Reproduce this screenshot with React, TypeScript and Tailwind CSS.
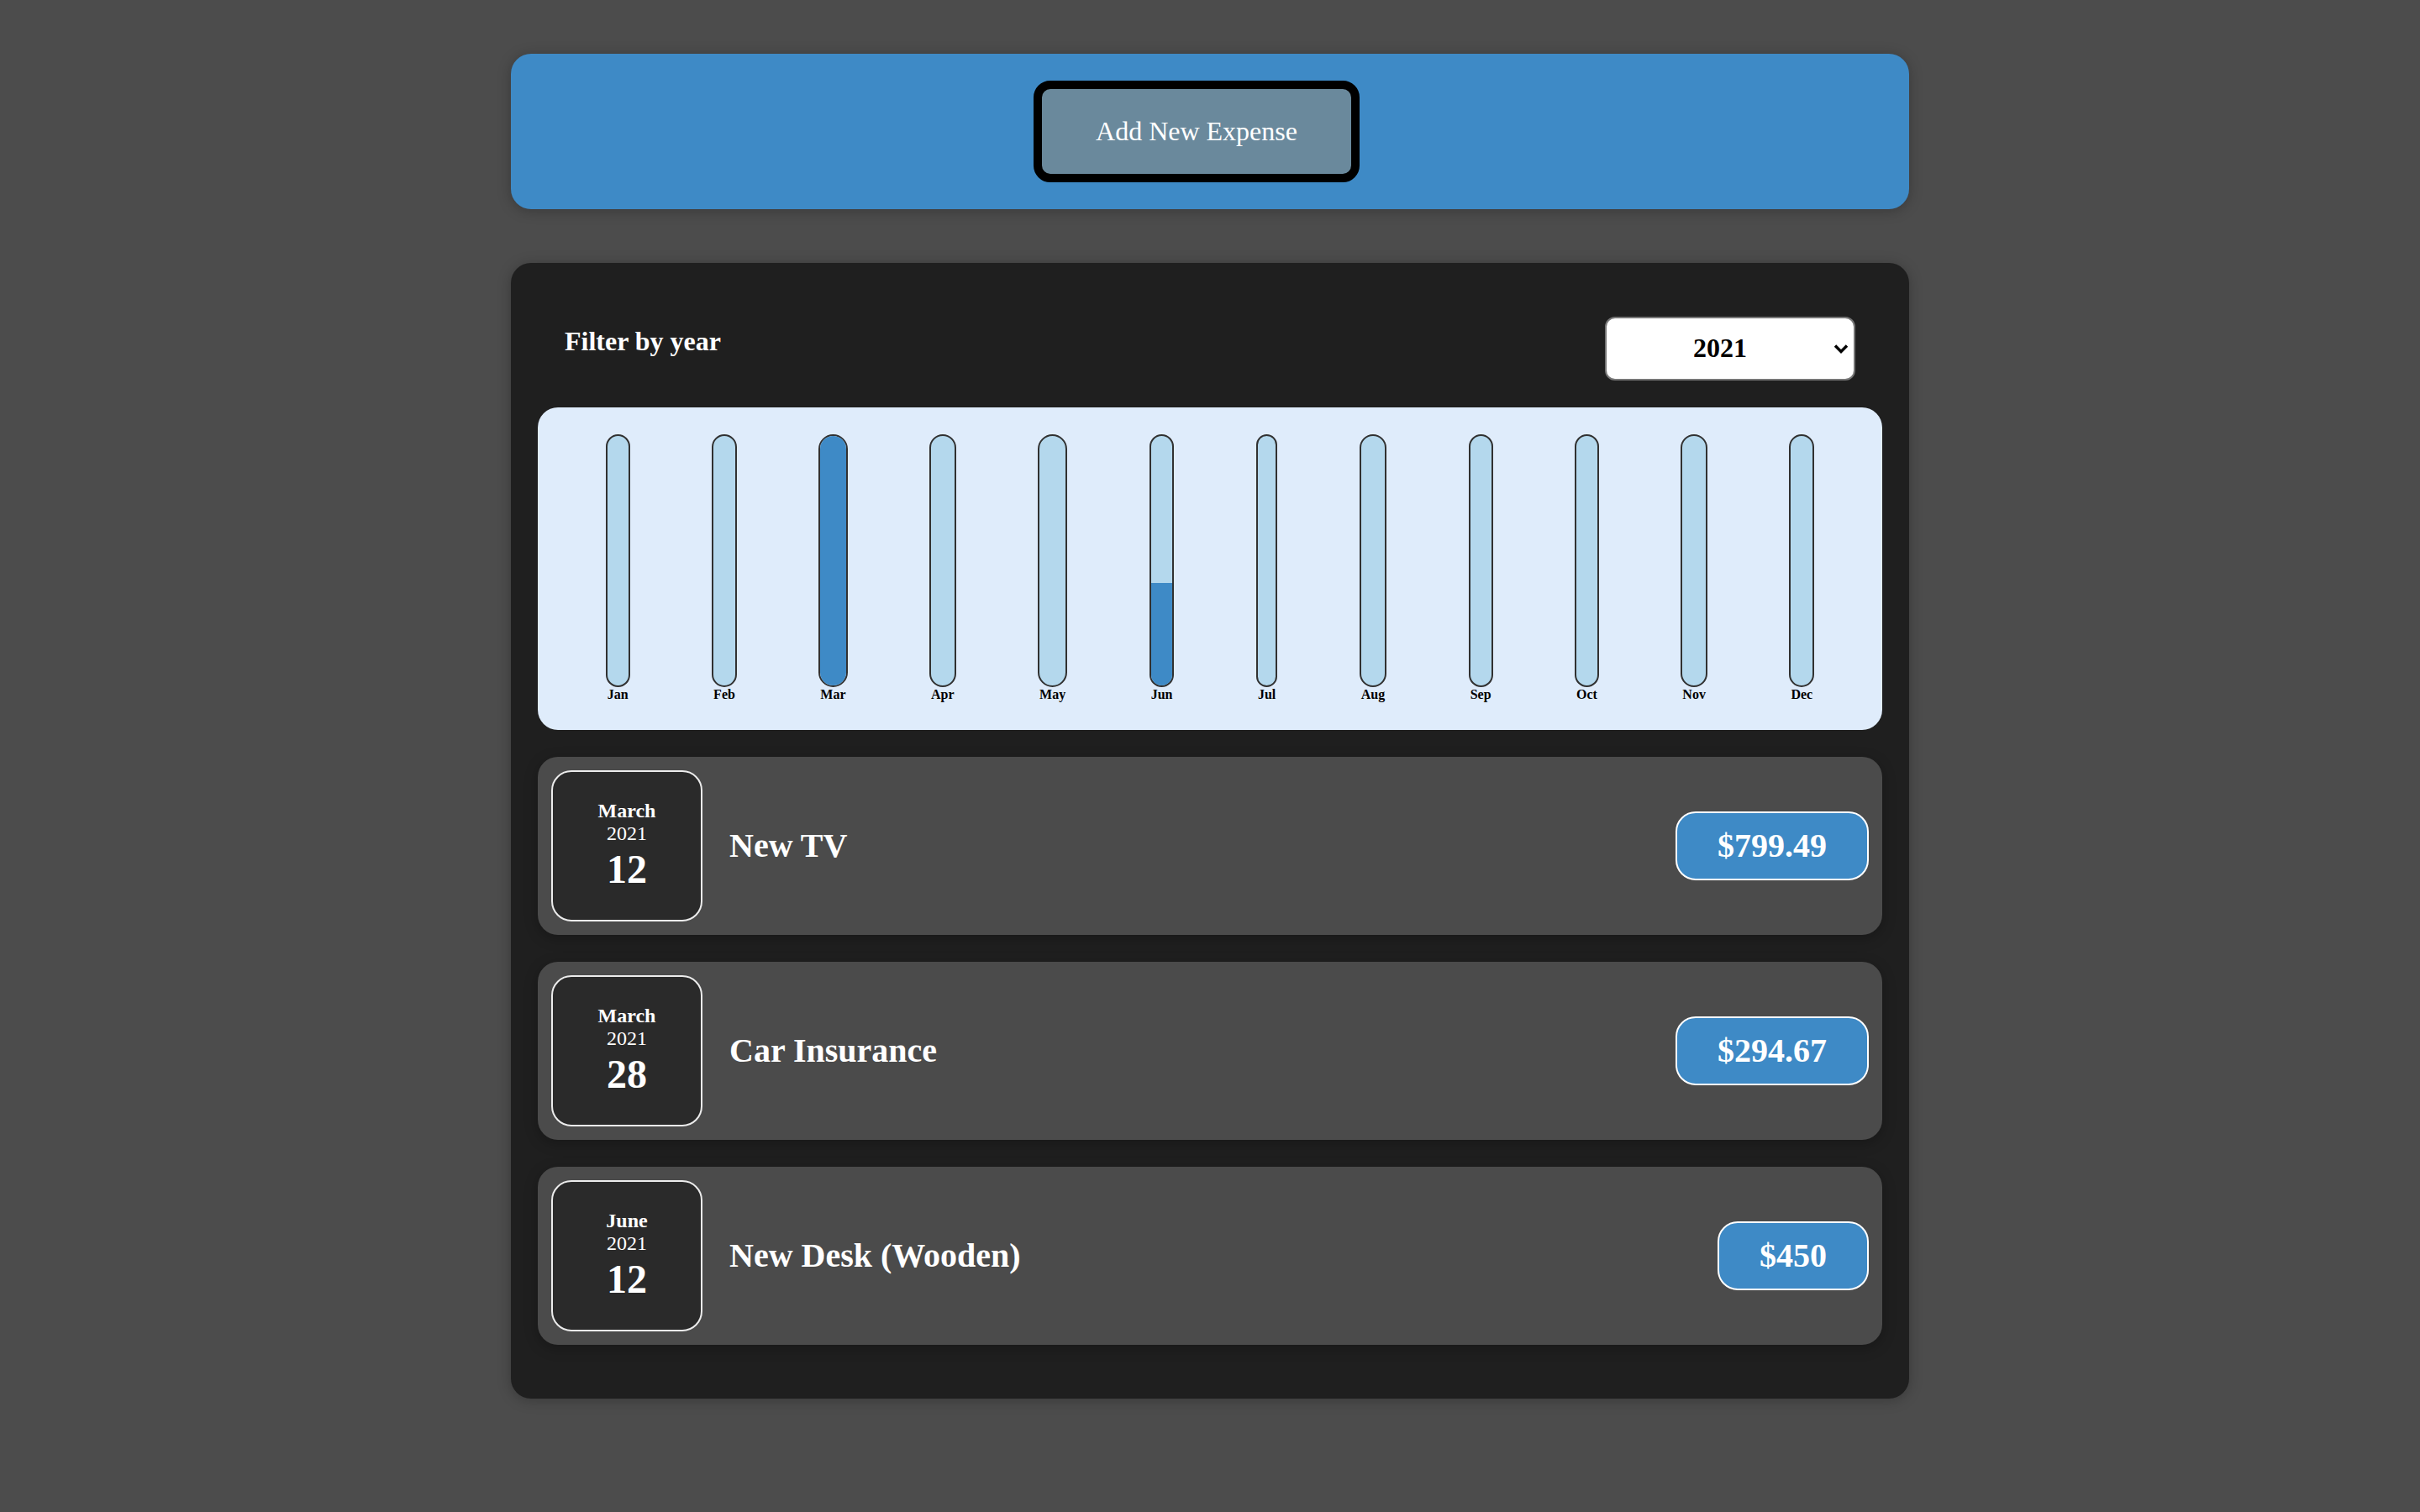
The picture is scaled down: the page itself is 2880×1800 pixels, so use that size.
import { useState } from 'react';

type Expense = {
    id: string;
    title: string;
    amount: number;
    date: Date;
};

const EXPENSES: Expense[] = [
    { id: 'e1', title: 'New TV', amount: 799.49, date: new Date(2021, 2, 12) },
    { id: 'e2', title: 'Car Insurance', amount: 294.67, date: new Date(2021, 2, 28) },
    { id: 'e3', title: 'New Desk (Wooden)', amount: 450, date: new Date(2021, 5, 12) },
];

const MONTH_NAMES = [
    'January', 'February', 'March', 'April', 'May', 'June',
    'July', 'August', 'September', 'October', 'November', 'December',
];

const MONTH_LABELS = ['Jan', 'Feb', 'Mar', 'Apr', 'May', 'Jun', 'Jul', 'Aug', 'Sep', 'Oct', 'Nov', 'Dec'];

export default function App() {
    const [year, setYear] = useState('2021');

    const filtered = EXPENSES.filter((e) => e.date.getFullYear().toString() === year);

    // monthly totals for the chart
    const totals = MONTH_LABELS.map((_, i) =>
        filtered.filter((e) => e.date.getMonth() === i).reduce((sum, e) => sum + e.amount, 0),
    );
    const total = filtered.reduce((sum, e) => sum + e.amount, 0);

    return (
        <div className="min-h-screen bg-[#4c4c4c] py-[64px] font-['Liberation_Serif','Times_New_Roman',serif] text-[32px] leading-[1.15]">
            {/* New expense bar */}
            <div className="mx-auto w-[1664px] rounded-[24px] bg-[#3e8ac6] p-[32px] text-center shadow-[0_2px_16px_rgba(0,0,0,0.25)]">
                <button
                    type="button"
                    className="mr-[32px] rounded-[20px] border-[10px] border-black bg-[#6a899c] px-[64px] py-[32px] text-[32px] leading-[1.15] text-white"
                >
                    Add New Expense
                </button>
            </div>

            {/* Expenses card */}
            <div className="mx-auto mt-[64px] w-[1664px] rounded-[24px] bg-[#1f1f1f] p-[32px] shadow-[0_2px_16px_rgba(0,0,0,0.25)]">
                <div className="px-[32px] text-white">
                    <div className="my-[32px] flex items-center justify-between">
                        <label className="mb-[16px] font-bold">Filter by year</label>
                        <div className="relative">
                            <select
                                value={year}
                                onChange={(e) => setYear(e.target.value)}
                                className="h-[76px] w-[298px] appearance-none rounded-[12px] border-2 border-[#767676] bg-white pl-[103px] text-[32px] font-bold text-black outline-none"
                            >
                                <option value="2022">2022</option>
                                <option value="2021">2021</option>
                                <option value="2020">2020</option>
                                <option value="2019">2019</option>
                            </select>
                            <svg
                                className="pointer-events-none absolute right-[8px] top-[31px] h-[14px] w-[18px]"
                                viewBox="0 0 18 14"
                                fill="none"
                            >
                                <path d="M2 3.5 9 10.5 16 3.5" stroke="black" strokeWidth="3.4" />
                            </svg>
                        </div>
                    </div>
                </div>

                {/* Chart */}
                <div className="flex h-[384px] justify-around rounded-[24px] bg-[#dfecfb] p-[32px] text-center">
                    {MONTH_LABELS.map((label, i) => {
                        const pct = total > 0 ? Math.round((totals[i] / Math.max(...totals)) * 100) : 0;
                        return (
                            <div key={label} className="flex h-full flex-col items-center">
                                <div className="flex min-h-0 w-[calc(100%+4px)] flex-1 flex-col justify-end overflow-hidden rounded-[24px] border-2 border-[#313131] bg-[#b4d8ed]">
                                    <div className="w-full shrink-0 bg-[#3e8ac6]" style={{ height: pct + '%' }} />
                                </div>
                                <div className="text-[16px] font-bold text-black">{label}</div>
                            </div>
                        );
                    })}
                </div>

                {/* List */}
                <ul className="list-none p-0">
                    {filtered.map((e) => (
                        <li key={e.id}>
                            <div className="my-[32px] flex items-center justify-between rounded-[24px] bg-[#4b4b4b] p-[16px] shadow-[0_4px_16px_rgba(0,0,0,0.25)]">
                                <div className="flex h-[180px] w-[180px] shrink-0 flex-col items-center justify-center rounded-[24px] border-2 border-[#ececec] bg-[#2a2a2a] text-white">
                                    <div className="text-[24px] font-bold">{MONTH_NAMES[e.date.getMonth()]}</div>
                                    <div className="text-[24px]">{e.date.getFullYear()}</div>
                                    <div className="text-[48px] font-bold">{e.date.getDate()}</div>
                                </div>
                                <div className="flex flex-1 items-center">
                                    <h2 className="mx-[32px] flex-1 text-[40px] font-bold text-white">{e.title}</h2>
                                    <div className="rounded-[24px] border-2 border-white bg-[#3e8ac6] px-[48px] py-[16px] text-[40px] font-bold text-white">
                                        ${e.amount}
                                    </div>
                                </div>
                            </div>
                        </li>
                    ))}
                </ul>
            </div>
        </div>
    );
}
